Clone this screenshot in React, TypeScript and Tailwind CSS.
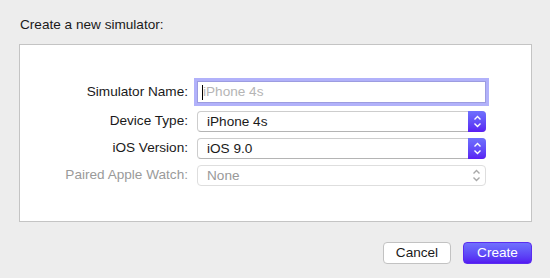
import React from 'react';

const font = { fontFamily: '"Liberation Sans", Arial, sans-serif' };

const Chevrons: React.FC<{ color: string }> = ({ color }) => (
  <svg width="9" height="13" viewBox="0 0 9 13" fill="none">
    <path d="M1.5 4.5 L4.5 1.5 L7.5 4.5" stroke={color} strokeWidth="1.4" />
    <path d="M1.5 8.5 L4.5 11.5 L7.5 8.5" stroke={color} strokeWidth="1.4" />
  </svg>
);

const PopUp: React.FC<{ value: string; disabled?: boolean }> = ({ value, disabled }) => (
  <div
    className={`flex h-[21px] w-[289px] items-stretch rounded-[4px] border bg-white ${
      disabled ? 'border-[#dedede]' : 'border-[#cdcdcd] border-b-[#b4b4b4]'
    }`}
  >
    <span className={`flex-1 pl-[9px] text-[13.6px] leading-[19px] ${disabled ? 'text-[#999]' : 'text-[#1a1a1a]'}`}>
      {value}
    </span>
    {disabled ? (
      <span className="flex w-[18px] items-center justify-center">
        <Chevrons color="#a8a8a8" />
      </span>
    ) : (
      <span className="-my-px -mr-px flex w-[18px] items-center justify-center rounded-r-[4px] bg-gradient-to-b from-[#6f70fd] to-[#5a1cf3]">
        <Chevrons color="#ffffff" />
      </span>
    )}
  </div>
);

const Row: React.FC<{ label: string; disabled?: boolean; children: React.ReactNode; className?: string }> = ({
  label,
  disabled,
  children,
  className,
}) => (
  <div className={`flex items-center ${className ?? ''}`}>
    <span className={`w-[169px] pr-px text-right text-[13.6px] ${disabled ? 'text-[#9a9a9a]' : 'text-[#1a1a1a]'}`}>
      {label}
    </span>
    <div className="ml-[8px]">{children}</div>
  </div>
);

export default function App() {
  return (
    <div className="h-[278px] w-[550px] bg-[#ededed] pl-[19px] pt-[17px]" style={font}>
      <div className="pl-px text-[13.6px] leading-[16px] text-[#1a1a1a]">Create a new simulator:</div>

      {/* Settings panel */}
      <div className="mt-[11px] h-[178px] w-[513px] border border-[#c4c4c4] bg-white pt-[36px]">
        <Row label="Simulator Name:">
          <div className="relative h-[22px] w-[289px] border border-[#9c9ce0] bg-white shadow-[0_0_0_3px_#b1b1fa]">
            <span className="block pl-[5px] text-[13.6px] leading-[20px] text-[#b5b5b5]">iPhone 4s</span>
            <span className="absolute left-[4px] top-[3px] h-[15px] w-px bg-black" />
          </div>
        </Row>
        <Row label="Device Type:" className="mt-[8px]">
          <PopUp value="iPhone 4s" />
        </Row>
        <Row label="iOS Version:" className="mt-[6px]">
          <PopUp value="iOS 9.0" />
        </Row>
        <Row label="Paired Apple Watch:" disabled className="mt-[6px]">
          <PopUp value="None" disabled />
        </Row>
      </div>

      {/* Buttons */}
      <div className="mt-[20px] flex w-[513px] justify-end gap-[12px]">
        <button className="h-[22px] w-[68px] rounded-[4px] border border-[#c2c2c2] bg-white text-[13.6px] text-[#1a1a1a]">
          Cancel
        </button>
        <button className="h-[22px] w-[69px] rounded-[4px] border border-[#5a2cf0] bg-gradient-to-b from-[#7070fd] to-[#5418f1] text-[13.6px] text-white">
          Create
        </button>
      </div>
    </div>
  );
}
